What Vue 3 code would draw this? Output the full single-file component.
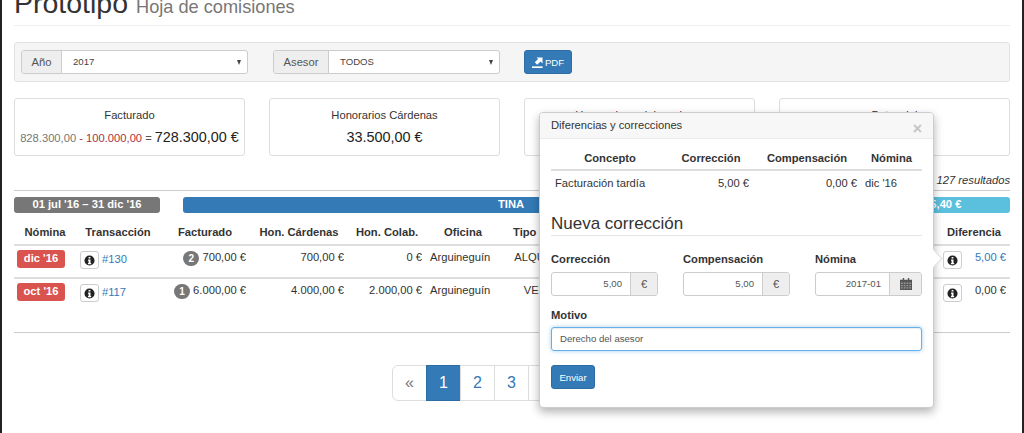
<template>
  <div class="page">
    <div class="page-header">
      <h1>Prototipo <small>Hoja de comisiones</small></h1>
    </div>

    <!-- filtros -->
    <div class="well">
      <div class="input-group group-year">
        <span class="addon addon-left">Año</span>
        <span class="select">2017<i class="caret"></i></span>
      </div>
      <div class="input-group group-asesor">
        <span class="addon addon-left">Asesor</span>
        <span class="select">TODOS<i class="caret"></i></span>
      </div>
      <button class="btn btn-pdf" type="button">
        <svg class="pdf-icon" viewBox="0 0 12 12" width="11" height="11">
          <path d="M0 10.200h11.500V12H0z" fill="#fff" />
          <path d="M5 .5h6.500V7L9.300 4.900 5.700 8.500 3 5.800l3.600-3.600z" fill="#fff" />
        </svg>
        PDF
      </button>
    </div>

    <!-- totales -->
    <div class="cards">
      <div v-for="card in cards" :key="card.title" class="card">
        <div class="card-title">{{ card.title }}</div>
        <div class="card-value">
          <template v-if="card.parts">
            <span class="part-gray">828.300,00</span>
            <span class="part-red"> - 100.000,00</span>
            <span class="part-eq"> = </span>
          </template>
          <span class="big">{{ card.value }}</span>
        </div>
      </div>
    </div>

    <div class="results"><em>127 resultados</em></div>

    <div class="bars">
      <div class="bar bar-gray">01 jul '16 – 31 dic '16</div>
      <div class="bar bar-blue">TINA</div>
      <div class="bar bar-cyan">1.235,40 €</div>
    </div>

    <table class="grid">
      <colgroup>
        <col class="c-nomina" /><col class="c-trans" /><col class="c-fact" /><col class="c-hon" />
        <col class="c-colab" /><col class="c-ofi" /><col class="c-tipo" /><col class="c-rest" />
        <col class="c-dif" />
      </colgroup>
      <thead>
        <tr>
          <th>Nómina</th>
          <th>Transacción</th>
          <th>Facturado</th>
          <th>Hon. Cárdenas</th>
          <th>Hon. Colab.</th>
          <th>Oficina</th>
          <th class="th-tipo">Tipo</th>
          <th></th>
          <th>Diferencia</th>
        </tr>
      </thead>
      <tbody>
        <tr v-for="row in rows" :key="row.id">
          <td class="td-label"><span class="label">{{ row.nomina }}</span></td>
          <td class="trans">
            <span class="info-btn"><svg class="info-icon" viewBox="0 0 12 12" width="11" height="11"><circle cx="6" cy="6" r="5.500" fill="#222" /><path d="M5 2.200h2v1.700H5z M4.400 5h2.700v3.600h.7V10H4.300V8.600H5V6.300h-.6z" fill="#fff" /></svg></span>
            <a>{{ row.id }}</a>
          </td>
          <td class="num"><span class="badge">{{ row.count }}</span> {{ row.facturado }}</td>
          <td class="num">{{ row.hon }}</td>
          <td class="num">{{ row.colab }}</td>
          <td>{{ row.oficina }}</td>
          <td class="center">{{ row.tipo }}</td>
          <td class="num"><a>{{ row.resto }}</a></td>
          <td class="dif">
            <span class="info-btn"><svg class="info-icon" viewBox="0 0 12 12" width="11" height="11"><circle cx="6" cy="6" r="5.500" fill="#222" /><path d="M5 2.200h2v1.700H5z M4.400 5h2.700v3.600h.7V10H4.300V8.600H5V6.300h-.6z" fill="#fff" /></svg></span>
            <a v-if="row.difLink">{{ row.dif }}</a>
            <span v-else>{{ row.dif }}</span>
          </td>
        </tr>
      </tbody>
    </table>

    <hr class="rule" />

    <div class="pager">
      <ul class="pagination">
        <li class="muted">«</li>
        <li class="active">1</li>
        <li>2</li>
        <li>3</li>
        <li>4</li>
        <li>5</li>
        <li class="last">»</li>
      </ul>
    </div>

    <!-- popover sobre la tabla -->
    <div class="popover">
      <i class="arrow"></i>
      <div class="popover-title">
        Diferencias y correcciones
        <span class="close">×</span>
      </div>
      <div class="popover-body">
        <table class="mini">
          <thead>
            <tr><th>Concepto</th><th>Corrección</th><th>Compensación</th><th>Nómina</th></tr>
          </thead>
          <tbody>
            <tr>
              <td>Facturación tardía</td>
              <td class="num">5,00 €</td>
              <td class="num">0,00 €</td>
              <td>dic '16</td>
            </tr>
          </tbody>
        </table>

        <h3 class="legend">Nueva corrección</h3>

        <div class="form-row">
          <div class="field">
            <label>Corrección</label>
            <div class="field-group">
              <span class="control">5,00</span><span class="addon addon-right">€</span>
            </div>
          </div>
          <div class="field">
            <label>Compensación</label>
            <div class="field-group">
              <span class="control">5,00</span><span class="addon addon-right">€</span>
            </div>
          </div>
          <div class="field">
            <label>Nómina</label>
            <div class="field-group">
              <span class="control">2017-01</span>
              <span class="addon addon-right addon-cal">
                <svg viewBox="0 0 13 13" width="12" height="12">
                  <path d="M0 2h13v11H0z M3 0h1.500v3H3z M8.500 0H10v3H8.500z" fill="#555" />
                  <path d="M1 5h2v1.500H1z M4 5h2v1.500H4z M7 5h2v1.500H7z M10 5h2v1.500h-2z M1 7.500h2V9H1z M4 7.500h2V9H4z M7 7.500h2V9H7z M10 7.500h2V9h-2z M1 10h2v1.500H1z M4 10h2v1.500H4z M7 10h2v1.500H7z M10 10h2v1.500h-2z" fill="#999" />
                </svg>
              </span>
            </div>
          </div>
        </div>

        <label class="motivo-label">Motivo</label>
        <div class="motivo">Derecho del asesor</div>

        <button class="btn btn-send" type="button">Enviar</button>
      </div>
    </div>
  </div>
</template>

<script setup>
const cards = [
  { title: 'Facturado', value: '728.300,00 €', parts: true },
  { title: 'Honorarios Cárdenas', value: '33.500,00 €' },
  { title: 'Honorarios colaboradores', value: '' },
  { title: 'Potencial', value: '' }
]

const rows = [
  {
    id: '#130', nomina: "dic '16", count: 2, facturado: '700,00 €', hon: '700,00 €', colab: '0 €',
    oficina: 'Arguineguín', tipo: 'ALQUILER', resto: '', dif: '5,00 €', difLink: true
  },
  {
    id: '#117', nomina: "oct '16", count: 1, facturado: '6.000,00 €', hon: '4.000,00 €', colab: '2.000,00 €',
    oficina: 'Arguineguín', tipo: 'VENTA', resto: '€', dif: '0,00 €', difLink: false
  }
]
</script>

<style>
html, body {
  margin: 0;
  background: #fff;
  overflow: hidden;
}
</style>

<style scoped>
.page {
  position: relative;
  box-sizing: border-box;
  width: 1024px;
  height: 433px;
  padding: 0 12px;
  border-left: 2px solid #222;
  border-right: 2px solid #222;
  overflow: hidden;
  font-family: "Liberation Sans", Arial, sans-serif;
  font-size: 11.2px;
  line-height: 17px;
  color: #333;
}

.page-header {
  display: flow-root;
  height: 25px;
  border-bottom: 1px solid #eee;
  margin-bottom: 16px;
}

h1 {
  margin: -13px 0 0;
  font-size: 28.500px;
  font-weight: 400;
  line-height: 33px;
  color: #333;
}

h1 small {
  font-size: 18.200px;
  color: #777;
}

.well {
  box-sizing: border-box;
  display: flex;
  align-items: center;
  height: 40px;
  padding: 0 6px;
  background: #f5f5f5;
  border: 1px solid #e3e3e3;
  border-radius: 3px;
  margin-bottom: 16px;
}

.input-group {
  box-sizing: border-box;
  display: flex;
  height: 24px;
  border: 1px solid #ccc;
  border-radius: 3px;
  background: #fff;
}

.group-year { width: 227px; margin-right: 25px; }
.group-asesor { width: 227px; margin-right: 24px; }

.addon-left {
  display: flex;
  align-items: center;
  justify-content: center;
  background: #eee;
  border-right: 1px solid #ccc;
  border-radius: 2px 0 0 2px;
  color: #555;
  font-size: 11.2px;
}

.group-year .addon-left { width: 39px; }
.group-asesor .addon-left { width: 54px; }

.select {
  position: relative;
  flex: 1;
  display: flex;
  align-items: center;
  padding: 0 0 2px 11px;
  font-size: 9.600px;
  color: #444;
}

.caret {
  position: absolute;
  right: 6px;
  top: 9px;
  border-top: 5px solid #444;
  border-left: 2.500px solid transparent;
  border-right: 2.500px solid transparent;
}

.btn {
  box-sizing: border-box;
  display: inline-flex;
  align-items: center;
  justify-content: center;
  background: #337ab7;
  border: 1px solid #2e6da4;
  border-radius: 3px;
  color: #fff;
  font-family: inherit;
  font-size: 9.600px;
  padding: 0;
}

.btn-pdf {
  width: 48px;
  height: 24px;
  gap: 2px;
}

.cards {
  display: flex;
  justify-content: space-between;
  margin-bottom: 34px;
}

.card {
  box-sizing: border-box;
  width: 231px;
  height: 58px;
  padding-top: 8px;
  border: 1px solid #ddd;
  border-radius: 3px;
  text-align: center;
  background: #fff;
}

.card-title {
  line-height: 16px;
  color: #333;
}

.card-value {
  margin-top: 5px;
  line-height: 18px;
  white-space: nowrap;
}

.part-gray { color: #777; }
.part-red { color: #a8323e; }
.part-eq { color: #555; }
.big { font-size: 14.400px; color: #222; }

.results {
  text-align: right;
  height: 0;
  margin-top: -17px;
  margin-bottom: 17px;
  line-height: 14px;
  color: #333;
}

.bars {
  display: flex;
  padding-top: 6px;
  border-top: 1px solid #ccc;
}

.bar {
  box-sizing: border-box;
  height: 16px;
  border-radius: 3px;
  color: #fff;
  font-weight: 700;
  line-height: 15px;
  text-align: center;
}

.bar-gray { width: 146px; background: #777; margin-right: 23px; }
.bar-blue { width: 656px; background: #337ab7; margin-right: 21px; }
.bar-cyan { width: 150px; background: #5bc0de; }

.grid {
  table-layout: fixed;
  border-collapse: separate;
  border-spacing: 0;
  width: 996px;
}

.c-nomina { width: 62px; }
.c-trans { width: 84px; }
.c-fact { width: 90px; }
.c-hon { width: 98px; }
.c-colab { width: 78px; }
.c-ofi { width: 74px; }
.c-tipo { width: 84px; }
.c-rest { width: 354px; }
.c-dif { width: 72px; }

.grid th {
  height: 28px;
  padding: 0 0 3px;
  box-sizing: content-box;
  vertical-align: bottom;
  text-align: center;
  font-weight: 700;
  color: #333;
  border-bottom: 2px solid #ddd;
  white-space: nowrap;
}

.grid th.th-tipo {
  text-align: left;
  padding-left: 13px;
}

.grid td {
  height: 28px;
  padding: 3px 4px 0;
  box-sizing: content-box;
  vertical-align: top;
  border-bottom: 2px solid #ddd;
  white-space: nowrap;
  overflow: hidden;
}

.grid td.td-label {
  padding-top: 4px;
  padding-left: 3px;
  padding-right: 0;
  height: 27px;
}

.grid tbody tr:last-child td {
  border-bottom: 0;
  height: 29px;
}

.grid tbody tr:last-child td.td-label {
  height: 28px;
}

.num { text-align: right; }
.center { text-align: center; }

.label {
  display: block;
  width: 48px;
  height: 18px;
  background: #d9534f;
  border-radius: 3px;
  color: #fff;
  font-weight: 700;
  line-height: 16px;
  text-align: center;
}

.info-btn {
  box-sizing: border-box;
  display: inline-flex;
  align-items: center;
  justify-content: center;
  width: 19px;
  height: 18px;
  margin-top: 2px;
  border: 1px solid #ccc;
  border-radius: 3px;
  background: #fff;
  vertical-align: top;
}

.trans a { margin-left: 3px; line-height: 21px; }

a { color: #337ab7; }

.badge {
  display: inline-block;
  width: 16px;
  height: 15px;
  margin-top: 2px;
  border-radius: 8px;
  background: #777;
  color: #fff;
  font-weight: 700;
  font-size: 10px;
  line-height: 15px;
  text-align: center;
  vertical-align: top;
}

.grid td.dif { text-align: right; }
.dif .info-btn { float: left; margin-left: 1px; }

.rule {
  border: 0;
  border-top: 1px solid #ccc;
  margin: 21px 0 32px;
}

.pager {
  display: flex;
  justify-content: center;
}

.pagination {
  display: flex;
  list-style: none;
  margin: 0;
  padding: 0;
}

.pagination li {
  box-sizing: border-box;
  width: 35px;
  height: 36px;
  border: 1px solid #ddd;
  margin-left: -1px;
  font-size: 16px;
  line-height: 34px;
  text-align: center;
  color: #337ab7;
}

.pagination li.muted {
  border-radius: 6px 0 0 6px;
  color: #777;
}

.pagination li.last {
  border-radius: 0 6px 6px 0;
}

.pagination li.active {
  background: #337ab7;
  border-color: #2e6da4;
  color: #fff;
}

.popover {
  position: absolute;
  left: 537px;
  top: 112px;
  box-sizing: border-box;
  width: 395px;
  height: 296px;
  background: #fff;
  border: 1px solid #ccc;
  border-radius: 4px;
  box-shadow: 0 4px 10px rgba(0, 0, 0, 0.3);
}

.arrow {
  position: absolute;
  right: -7px;
  top: 139px;
  box-sizing: border-box;
  width: 13px;
  height: 13px;
  background: #fff;
  transform: rotate(45deg);
  border-top: 1px solid #ddd;
  border-right: 1px solid #ddd;
}

.popover-title {
  position: relative;
  box-sizing: border-box;
  height: 26px;
  padding: 4px 11px;
  background: #f7f7f7;
  border-bottom: 1px solid #ebebeb;
  border-radius: 3px 3px 0 0;
  color: #333;
}

.close {
  position: absolute;
  right: 11px;
  top: 7px;
  font-size: 16px;
  font-weight: 700;
  color: #c4c4c4;
}

.popover-body {
  padding: 8px 11px;
}

.mini {
  table-layout: fixed;
  border-collapse: separate;
  border-spacing: 0;
  width: 371px;
}

.mini th {
  box-sizing: content-box;
  height: 22px;
  padding: 0;
  font-weight: 700;
  text-align: center;
  border-bottom: 2px solid #ddd;
}

.mini th:nth-child(1) { width: 118px; }
.mini th:nth-child(2) { width: 84px; }
.mini th:nth-child(3) { width: 108px; }
.mini th:nth-child(4) { width: 61px; }

.mini td {
  height: 24px;
  padding: 0 4px;
}

.legend {
  margin: 18px 0 0;
  padding-bottom: 1px;
  border-bottom: 1px solid #e5e5e5;
  font-size: 17px;
  font-weight: 400;
  line-height: 21px;
  color: #333;
}

.form-row {
  display: flex;
  gap: 25px;
  margin-top: 15px;
}

.field { width: 107px; }

label {
  display: block;
  line-height: 17px;
  font-weight: 700;
  color: #333;
  margin-bottom: 4px;
}

.field-group {
  box-sizing: border-box;
  display: flex;
  height: 24px;
  border: 1px solid #ccc;
  border-radius: 3px;
  overflow: hidden;
}

.control {
  flex: 1;
  padding-right: 8px;
  line-height: 22px;
  text-align: right;
  font-size: 9.600px;
  color: #555;
}

.addon-right {
  display: flex;
  align-items: center;
  justify-content: center;
  width: 26px;
  background: #eee;
  border-left: 1px solid #ccc;
  color: #555;
}

.addon-cal { width: 31px; }

.motivo-label {
  margin-top: 11px;
  margin-bottom: 3px;
}

.motivo {
  box-sizing: border-box;
  height: 24px;
  padding-left: 8px;
  line-height: 22px;
  font-size: 9.600px;
  color: #555;
  border: 1px solid #66afe9;
  border-radius: 3px;
  box-shadow: inset 0 1px 1px rgba(0, 0, 0, 0.075), 0 0 4px rgba(102, 175, 233, 0.6);
}

.btn-send {
  display: flex;
  width: 44px;
  height: 24px;
  margin-top: 14px;
}
</style>
